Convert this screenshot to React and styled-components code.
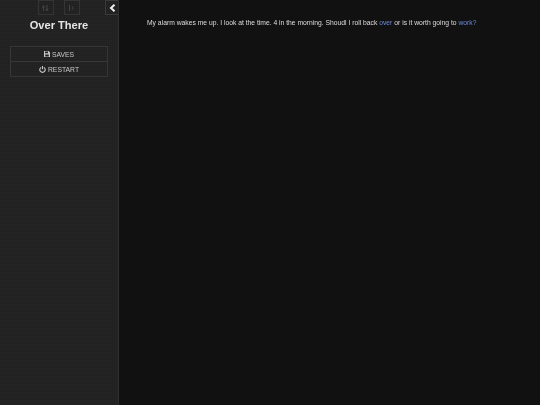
import React from "react";
import styled, { createGlobalStyle } from "styled-components";

const Global = createGlobalStyle`
  html, body { margin: 0; padding: 0; height: 100%; background: #111; }
  #root { height: 100%; }
  * { box-sizing: border-box; }
`;

const Page = styled.div`
  display: flex;
  width: 540px;
  height: 405px;
  overflow: hidden;
  background: #111;
  color: #eee;
  font-family: "Liberation Sans", Arial, sans-serif;
`;

const Sidebar = styled.aside`
  position: relative;
  flex: none;
  width: 119px;
  height: 100%;
  background-color: #222;
  background-image: linear-gradient(rgba(255, 255, 255, 0.012) 1px, transparent 1px),
    linear-gradient(90deg, rgba(0, 0, 0, 0.05) 1px, transparent 1px);
  background-size: 2px 2px;
  border-right: 1px solid #2e2e2e;
  padding: 0 10px;
  text-align: center;
  will-change: transform;
`;

const History = styled.div`
  display: flex;
  justify-content: center;
  gap: 10px;
  margin-left: -1px;
`;

const HistoryButton = styled.div`
  width: 16px;
  height: 15px;
  border: 1px solid #353535;
  display: flex;
  align-items: center;
  justify-content: center;
  color: #444;
`;

const Stow = styled.button`
  position: absolute;
  top: 0;
  right: 0;
  width: 13px;
  height: 15px;
  padding: 0;
  background: #222;
  border: 1px solid #3a3a3a;
  border-right: none;
  color: #eee;
  display: flex;
  align-items: center;
  justify-content: center;
`;

const Title = styled.h1`
  margin: 2px 0 13px;
  font-size: 11.1px;
  line-height: 16px;
  font-weight: 700;
  color: #e4e4e4;
`;

const Menu = styled.ul`
  list-style: none;
  margin: 0;
  padding: 0;
  border: 1px solid #363636;
`;

const MenuItem = styled.li`
  height: 14px;
  display: flex;
  align-items: center;
  justify-content: center;
  gap: 2px;
  font-size: 6.8px;
  color: #c8c8c8;
  & + & {
    border-top: 1px solid #363636;
    height: 15px;
  }
  & svg {
    display: block;
  }
`;

const Passage = styled.main`
  flex: 1;
  padding: 18px 28px;
`;

const Text = styled.p`
  margin: 0;
  font-size: 6.75px;
  line-height: 9px;
  color: #dcdcdc;
  white-space: nowrap;
  will-change: transform;
`;

const Link = styled.a`
  color: #6a8ad4;
`;

const Undo = () => (
  <svg width="8" height="8" viewBox="0 0 8 8" fill="none" stroke="currentColor" strokeWidth="1">
    <path d="M1.5 7V2.5M0.5 3.5L1.5 1.5L2.5 3.5M5 1V6M4 5L5 7L6 5" />
  </svg>
);

const Redo = () => (
  <svg width="8" height="8" viewBox="0 0 8 8" fill="none" stroke="currentColor" strokeWidth="1">
    <path d="M1.5 1V7M5 2.5A2 2 0 0 0 5 5.5" />
  </svg>
);

const Chevron = () => (
  <svg width="7" height="8" viewBox="0 0 7 8" fill="none" stroke="currentColor" strokeWidth="2">
    <path d="M5.5 0.7L2 4L5.5 7.3" />
  </svg>
);

const SaveIcon = () => (
  <svg width="6" height="6" viewBox="0 0 6 6" fill="currentColor">
    <path d="M0 0H4.6L6 1.4V6H0ZM1 .6V2.2H4V.6ZM1.2 3.4V5.4H4.8V3.4Z" fillRule="evenodd" />
  </svg>
);

const PowerIcon = () => (
  <svg width="7" height="7" viewBox="0 0 7 7" fill="none" stroke="currentColor" strokeWidth="1.1">
    <path d="M2.1 1.4A2.7 2.7 0 1 0 4.9 1.4M3.5 0V3.2" />
  </svg>
);

export default function App() {
  return (
    <Page>
      <Global />
      <Sidebar>
        <Stow><Chevron /></Stow>
        <History>
          <HistoryButton><Undo /></HistoryButton>
          <HistoryButton><Redo /></HistoryButton>
        </History>
        <Title>Over There</Title>
        <Menu>
          <MenuItem><SaveIcon /> SAVES</MenuItem>
          <MenuItem><PowerIcon /> RESTART</MenuItem>
        </Menu>
      </Sidebar>
      <Passage>
        <Text>
          My alarm wakes me up. I look at the time. 4 in the morning. Shoudl I roll back <Link>over</Link> or is it worth going to <Link>work?</Link>
        </Text>
      </Passage>
    </Page>
  );
}
